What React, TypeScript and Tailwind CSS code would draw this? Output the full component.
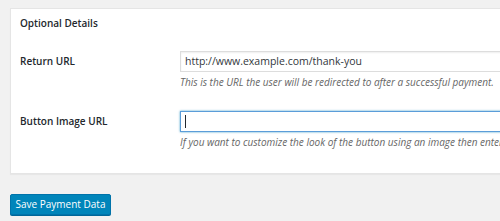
export default function App() {
  return (
    <div className="w-[500px] h-[221px] overflow-hidden bg-[#f1f1f1] text-[#23282d]" style={{ fontFamily: '"Open Sans", sans-serif' }}>
      <div className="pl-[10px] pt-[8px]">
        <div className="w-[600px] bg-white border border-[#e5e5e5] shadow-[0_1px_1px_rgba(0,0,0,0.04)]">
          <div className="px-[9px] pt-[7px] pb-[7px] text-[10px] font-semibold leading-[14px]">Optional Details</div>
          <div className="flex pt-[14px]">
            <div className="w-[169px] shrink-0 pl-[9px] pt-[3px] text-[10px] font-semibold leading-[14px]">Return URL</div>
            <div className="flex flex-col">
              <div className="w-[400px] h-[21px] border border-[#ddd] shadow-[inset_0_1px_2px_rgba(0,0,0,0.07)] px-[4px] text-[10.5px] leading-[19px] text-[#32373c]">http://www.example.com/thank-you</div>
              <div className="mt-[3px] text-[10px] italic leading-[14px] text-[#666] whitespace-nowrap">This is the URL the user will be redirected to after a successful payment.</div>
            </div>
          </div>
          <div className="flex pt-[22px] pb-[24px]">
            <div className="w-[169px] shrink-0 pl-[9px] pt-[3px] text-[10px] font-semibold leading-[14px]">Button Image URL</div>
            <div className="flex flex-col">
              <div className="w-[400px] h-[21px] border border-[#5b9dd9] shadow-[0_0_2px_rgba(30,140,190,0.8)] px-[4px] flex items-center">
                <div className="w-px h-[13px] bg-[#23282d]" />
              </div>
              <div className="mt-[3px] text-[10px] italic leading-[14px] text-[#666] whitespace-nowrap">If you want to customize the look of the button using an image then enter the URL of the image here.</div>
            </div>
          </div>
        </div>
        <div className="mt-[20px] flex">
          <button className="h-[21px] w-[101px] bg-[#0085ba] border border-[#0073aa] rounded-[2px] text-white text-[10px] leading-[19px] shadow-[0_1px_0_#006799] whitespace-nowrap">Save Payment Data</button>
        </div>
      </div>
    </div>
  );
}
